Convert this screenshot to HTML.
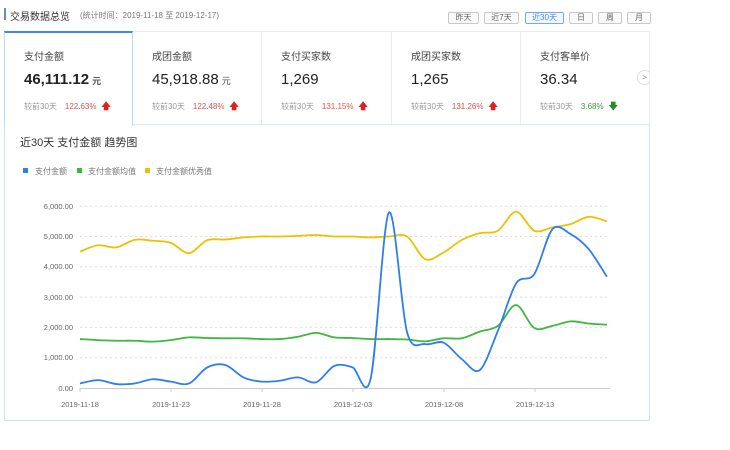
<!DOCTYPE html>
<html><head><meta charset="utf-8"><style>
*{margin:0;padding:0;box-sizing:border-box}
body{width:730px;height:450px;background:#fff;font-family:"Liberation Sans","Noto Sans CJK SC",sans-serif;position:relative;overflow:hidden;color:#333}
.abs{position:absolute;white-space:nowrap}
.btn{position:absolute;top:12px;height:12px;border:1px solid #c8c8c8;border-radius:2px;font-size:8px;line-height:10px;text-align:center;color:#666;background:#fafafa}
.card{position:absolute;top:31px;height:94px;border:1px solid #e6eef4;border-left:none;border-bottom:1px solid #dbe8f0}
.card .t{position:absolute;left:19px;top:16px;font-size:10px;color:#444}
.card .v{position:absolute;left:19px;top:39px;font-size:15px;color:#222}
.card .v small{font-size:9px;color:#555;margin-left:3px}
.card .c{position:absolute;left:19px;top:67px;font-size:8px;color:#999}
.card .c span{margin-left:8px;color:#d9534f}
.card .c b{color:#e02020;margin-left:5px;font-size:9px}
.card .c .g{color:#3a9a3a}
.card .c b.g{color:#2a8a2a}
</style></head><body>
<div class="abs" style="left:4px;top:8px;width:2px;height:12px;background:#6b8db5"></div>
<div class="abs" style="left:10px;top:8px;font-size:10px;color:#333">交易数据总览</div>
<div class="abs" style="left:80px;top:10px;font-size:8px;color:#777">(统计时间：2019-11-18 至 2019-12-17)</div>
<div class="btn" style="left:448px;width:31px">昨天</div>
<div class="btn" style="left:484px;width:35px">近7天</div>
<div class="btn" style="left:525px;width:39px;border-color:#7aaae0;color:#4a8ad8;background:#f3f8fe">近30天</div>
<div class="btn" style="left:569px;width:24px">日</div>
<div class="btn" style="left:598px;width:24px">周</div>
<div class="btn" style="left:627px;width:24px">月</div>

<div class="card" style="left:4px;width:129px;border:1px solid #bcdcf5;border-top:2px solid #3f8ae0;border-bottom:none;height:95px;background:#fff;z-index:2">
<div class="t" style="top:15px">支付金额</div><div class="v" style="top:38px;font-weight:bold">46,111.12<small>元</small></div><div class="c" style="top:66px">较前30天<span>122.63%</span><b>🡅</b></div></div>
<div class="card" style="left:133px;width:129px"><div class="t">成团金额</div><div class="v">45,918.88<small>元</small></div><div class="c">较前30天<span>122.48%</span><b>🡅</b></div></div>
<div class="card" style="left:262px;width:130px"><div class="t">支付买家数</div><div class="v">1,269</div><div class="c">较前30天<span>131.15%</span><b>🡅</b></div></div>
<div class="card" style="left:392px;width:129px"><div class="t">成团买家数</div><div class="v">1,265</div><div class="c">较前30天<span>131.26%</span><b>🡅</b></div></div>
<div class="card" style="left:521px;width:129px;border-right:1px solid #e6eef4;overflow:hidden"><div class="t">支付客单价</div><div class="v">36.34</div><div class="c">较前30天<span class="g">3.68%</span><b class="g">🡇</b></div>
<div style="position:absolute;left:116px;top:38px;width:15px;height:15px;border:1px solid #ddd;border-radius:50%;font-size:8px;line-height:13px;text-align:center;color:#888;background:#fff">&gt;</div></div>

<div class="abs" style="left:4px;top:124px;width:646px;height:297px;border:1px solid #cfe3ef;border-top:1px solid #dbe8f0"></div>
<div class="abs" style="left:20px;top:134px;font-size:11px;color:#333">近30天 支付金额 趋势图</div>
<div class="abs" style="left:23px;top:168px;width:5px;height:5px;background:#2f7df0"></div>
<div class="abs" style="left:35px;top:166px;font-size:8px;color:#777">支付金额</div>
<div class="abs" style="left:77px;top:168px;width:5px;height:5px;background:#3db83d"></div>
<div class="abs" style="left:88px;top:166px;font-size:8px;color:#777">支付金额均值</div>
<div class="abs" style="left:145px;top:168px;width:5px;height:5px;background:#f0c000"></div>
<div class="abs" style="left:156px;top:166px;font-size:8px;color:#777">支付金额优秀值</div>

<svg id="ch" class="abs" style="left:0;top:0" width="730" height="450" xmlns="http://www.w3.org/2000/svg" font-family="Liberation Sans,sans-serif" font-size="7.5" fill="#666">
<g stroke="#ddd" stroke-dasharray="2,3" stroke-width="1">
<line x1="80" x2="610" y1="206.2" y2="206.2"/><line x1="80" x2="610" y1="236.5" y2="236.5"/><line x1="80" x2="610" y1="266.8" y2="266.8"/><line x1="80" x2="610" y1="297.1" y2="297.1"/><line x1="80" x2="610" y1="327.4" y2="327.4"/><line x1="80" x2="610" y1="357.7" y2="357.7"/>
</g>
<line x1="80" x2="610" y1="388.5" y2="388.5" stroke="#ccc"/>
<g text-anchor="end"><text x="73" y="209">6,000.00</text><text x="73" y="239">5,000.00</text><text x="73" y="269">4,000.00</text><text x="73" y="300">3,000.00</text><text x="73" y="330">2,000.00</text><text x="73" y="360">1,000.00</text><text x="73" y="391">0.00</text></g>
<g text-anchor="middle"><text x="80" y="407">2019-11-18</text><text x="171" y="407">2019-11-23</text><text x="262" y="407">2019-11-28</text><text x="353" y="407">2019-12-03</text><text x="444" y="407">2019-12-08</text><text x="535" y="407">2019-12-13</text></g>
<g stroke="#ccc"><line x1="80" x2="80" y1="388" y2="392"/><line x1="171" x2="171" y1="388" y2="392"/><line x1="262" x2="262" y1="388" y2="392"/><line x1="353" x2="353" y1="388" y2="392"/><line x1="444" x2="444" y1="388" y2="392"/><line x1="535" x2="535" y1="388" y2="392"/></g>
<path id="pg" fill="none" stroke="#3db83d" stroke-width="1.8"/>
<path id="py" fill="none" stroke="#f0c000" stroke-width="1.8"/>
<path id="pb" fill="none" stroke="#2f7df0" stroke-width="1.8"/>
</svg>
<script>
var B=[150,260,130,150,290,210,150,680,760,350,210,240,350,190,730,680,320,5790,1840,1450,1500,960,590,1890,3450,3760,5240,5080,4580,3670];
var Y=[4500,4710,4640,4890,4860,4790,4450,4880,4900,4970,5000,5000,5020,5050,5000,5000,4970,5000,5000,4250,4470,4880,5110,5190,5820,5190,5300,5410,5650,5500];
var G=[1615,1580,1560,1560,1530,1580,1670,1650,1640,1640,1615,1615,1690,1820,1670,1650,1615,1615,1600,1540,1640,1640,1860,2050,2740,1980,2050,2200,2130,2090];
function path(d){var p=d.map(function(v,i){return[80+18.17*i,388-v*0.0303]});var s="M"+p[0][0]+","+p[0][1];
for(var i=0;i<p.length-1;i++){var p0=p[i-1]||p[i],p1=p[i],p2=p[i+1],p3=p[i+2]||p2;var t=0.16;
s+=" C"+(p1[0]+(p2[0]-p0[0])*t)+","+(p1[1]+(p2[1]-p0[1])*t)+" "+(p2[0]-(p3[0]-p1[0])*t)+","+(p2[1]-(p3[1]-p1[1])*t)+" "+p2[0]+","+p2[1];}return s;}
document.getElementById("pb").setAttribute("d",path(B));
document.getElementById("py").setAttribute("d",path(Y));
document.getElementById("pg").setAttribute("d",path(G));
</script>
</body></html>
